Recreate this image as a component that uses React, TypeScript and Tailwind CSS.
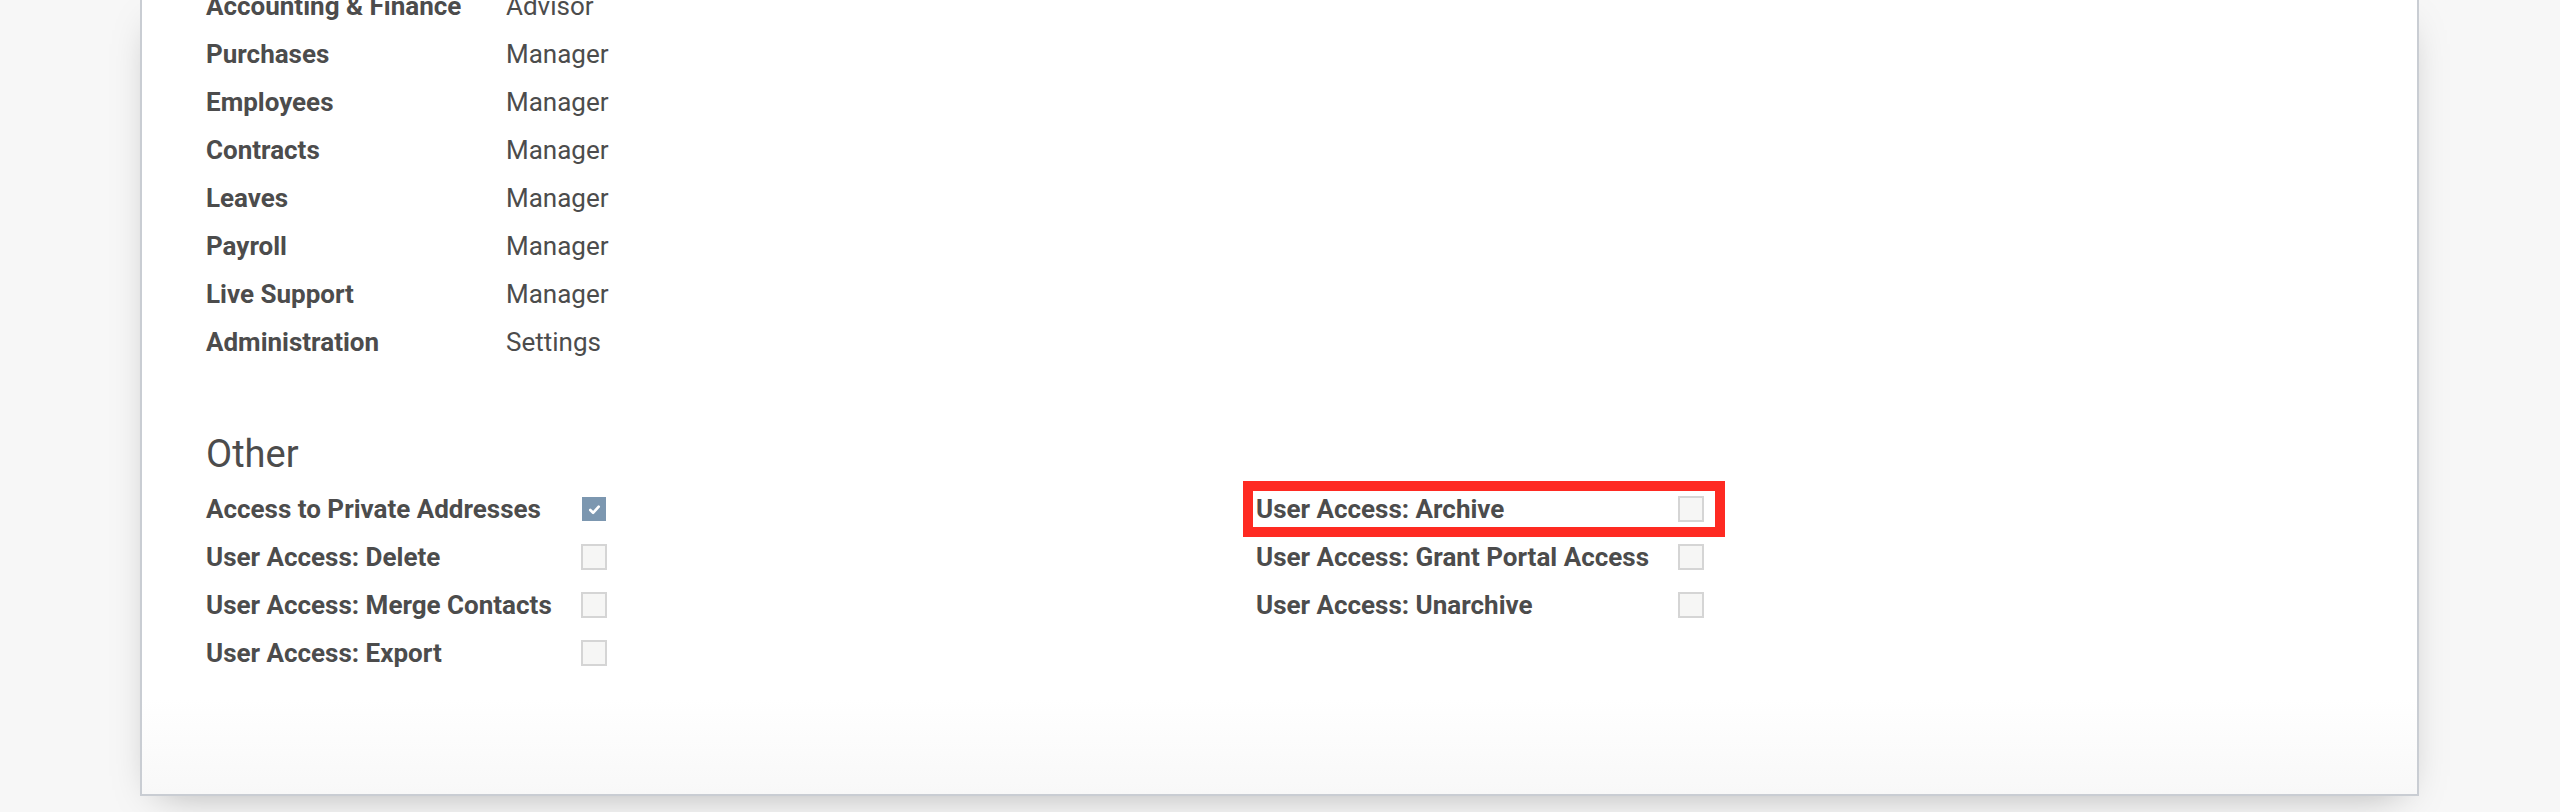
import React from "react";

const ROLES: [string, string][] = [
  ["Accounting & Finance", "Advisor"],
  ["Purchases", "Manager"],
  ["Employees", "Manager"],
  ["Contracts", "Manager"],
  ["Leaves", "Manager"],
  ["Payroll", "Manager"],
  ["Live Support", "Manager"],
  ["Administration", "Settings"],
];

const LEFT: [string, boolean][] = [
  ["Access to Private Addresses", true],
  ["User Access: Delete", false],
  ["User Access: Merge Contacts", false],
  ["User Access: Export", false],
];

const RIGHT: [string, boolean][] = [
  ["User Access: Archive", false],
  ["User Access: Grant Portal Access", false],
  ["User Access: Unarchive", false],
];

function Check({ on }: { on: boolean }) {
  if (on) {
    return (
      <span className="m-px flex h-[24px] w-[24px] items-center justify-center bg-[#7c97b0]">
        <svg viewBox="0 0 16 16" className="h-[15px] w-[15px]" fill="none" stroke="white" strokeWidth="2.8" strokeLinecap="round" strokeLinejoin="round">
          <path d="M3.5 8.5l3 3 6-6.5" />
        </svg>
      </span>
    );
  }
  return <span className="block h-[26px] w-[26px] border-2 border-[#d5d5d5] bg-[#f6f6f5]" />;
}

export default function App() {
  return (
    <div className="h-[812px] w-[2560px] overflow-hidden bg-[#f7f7f7] font-['Roboto',sans-serif] text-[26px] text-[#4c4c4c]">
      {/* sheet: flex column so the negative top margin stays inside */}
      <div className="ml-[140px] flex h-[796px] w-[2279px] flex-col border-x-2 border-b-2 border-[#c9cdd3] bg-gradient-to-b from-white from-[88%] to-[#f8f8f8] px-[64px] shadow-[0_12px_40px_-18px_rgba(0,0,0,0.35)]">
        <div className="-mt-[18px] grid grid-cols-[300px_auto] justify-start">
          {ROLES.map(([app, role]) => (
            <React.Fragment key={app}>
              <div className="flex h-[48px] items-center font-bold">{app}</div>
              <div className="flex h-[48px] items-center">{role}</div>
            </React.Fragment>
          ))}
        </div>

        <h2 className="mt-[66px] text-[38px] leading-[44px] font-normal">Other</h2>

        <div className="mt-[9px] grid grid-cols-[1050px_1fr]">
          <div className="grid grid-cols-[375px_auto] justify-start">
            {LEFT.map(([label, on]) => (
              <React.Fragment key={label}>
                <div className="flex h-[48px] items-center font-bold">{label}</div>
                <div className="flex h-[48px] items-center">
                  <Check on={on} />
                </div>
              </React.Fragment>
            ))}
          </div>
          <div className="flex flex-col">
            {RIGHT.map(([label, on], i) => (
              <div key={label} className="relative grid h-[48px] w-[448px] grid-cols-[422px_auto] items-center">
                <div className="font-bold">{label}</div>
                <Check on={on} />
                {i === 0 && (
                  <span className="pointer-events-none absolute -top-[4px] -right-[21px] -bottom-[4px] -left-[13px] border-[10px] border-[#fe2a22]" />
                )}
              </div>
            ))}
          </div>
        </div>
      </div>
    </div>
  );
}
